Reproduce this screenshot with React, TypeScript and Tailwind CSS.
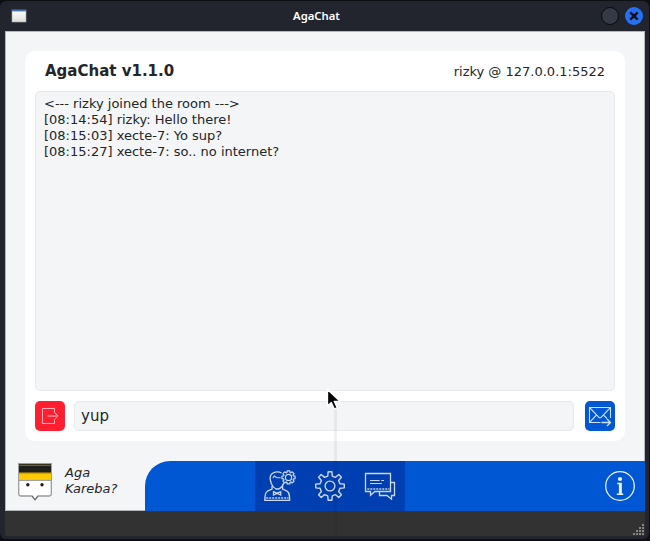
import React from "react";

const messages = [
  "<--- rizky joined the room --->",
  "[08:14:54] rizky: Hello there!",
  "[08:15:03] xecte-7: Yo sup?",
  "[08:15:27] xecte-7: so.. no internet?",
];

// Outline of a toothed wheel: eight teeth around (cx, cy).
function gearPath(cx: number, cy: number, outer: number, root: number, tip: number, base: number) {
  const points: string[] = [];
  for (let i = 0; i < 8; i++) {
    const mid = (i * Math.PI) / 4 - Math.PI / 2;
    const corners: [number, number][] = [
      [root, -base],
      [outer, -tip],
      [outer, tip],
      [root, base],
    ];
    for (const [r, a] of corners) {
      points.push(`${(cx + r * Math.cos(mid + a)).toFixed(2)} ${(cy + r * Math.sin(mid + a)).toFixed(2)}`);
    }
  }
  return `M${points.join("L")}Z`;
}

function WindowIcon() {
  return (
    <svg width="16" height="14" viewBox="0 0 16 14">
      <defs>
        <linearGradient id="pane" x1="0" y1="0" x2="0" y2="1">
          <stop offset="0" stopColor="#fff" />
          <stop offset="1" stopColor="#deded8" />
        </linearGradient>
      </defs>
      <rect x="1" y="1" width="14" height="12" fill="url(#pane)" stroke="#a9aaa8" strokeWidth="0.6" />
      <rect x="1" y="1" width="14" height="1.4" fill="#4773ad" />
      <rect x="1" y="2.2" width="14" height="0.8" fill="#a9c2e2" />
    </svg>
  );
}

function ProfileIcon() {
  return (
    <svg width="32" height="32" viewBox="0 0 32 32" fill="none" stroke="#ccd8ee">
      <path d="M17.5 3C15 1.4 10.5 1.6 8.6 3.4C6.3 4.4 6 7 6.2 9.5L7.2 13.5C8.2 15.8 10.2 18.2 12 19H14.8C16.8 18 19 15.8 19.9 12.8" strokeWidth="1.3" />
      <path d="M8.8 8L10.3 6L12.5 7.4C14 8 15 7.7 16.6 7.8" strokeWidth="1.1" />
      <path d="M8 16V19L3.4 21.2C1.1 22.5 .8 25 .8 30.4H25.6C25.6 25.5 25.6 22.5 23 21.2L18.6 19V16" strokeWidth="1.3" />
      <path d="M9.5 21.7V25L13 23.4L16.7 25V21.7L13 23.2Z" strokeWidth="1.3" />
      <path d="M2.2 28H24.5" strokeWidth="2" strokeDasharray="2 1" opacity="0.7" />
      <path d={gearPath(24.5, 7.4, 6.7, 5.1, 0.2, 0.3)} strokeWidth="1.2" strokeLinejoin="round" />
      <circle cx="24.5" cy="7.4" r="3.1" strokeWidth="1.2" />
    </svg>
  );
}

function SettingsIcon() {
  return (
    <svg width="32" height="32" viewBox="0 0 32 32" fill="none" stroke="#ccd8ee">
      <path d={gearPath(16, 16, 14.4, 10.2, 0.13, 0.22)} strokeWidth="1.4" strokeLinejoin="round" />
      <circle cx="16" cy="16" r="4.9" strokeWidth="1.4" />
    </svg>
  );
}

function ChatIcon() {
  return (
    <svg width="32" height="32" viewBox="0 0 32 32" fill="none" stroke="#ccd8ee">
      <path d="M1.5 3.5H26.5V21.5H10.8L6.5 25.3V21.5H1.5Z" strokeWidth="1.3" />
      <path d="M26.5 12.5H30.5V25.5H27.5V29.2L23 25.5H15.5V21.5" strokeWidth="1.3" />
      <path d="M6 10.5H15.6M17.2 10.5H20M6 13.5H17.8" strokeWidth="1.1" />
      <path d="M3.3 19H25.5" strokeWidth="2" strokeDasharray="2 1" opacity="0.7" />
    </svg>
  );
}

function InfoIcon() {
  return (
    <svg width="32" height="32" viewBox="0 0 32 32" fill="none" stroke="#edf3fc">
      <circle cx="16" cy="16" r="14.3" strokeWidth="1.25" />
      <circle cx="16" cy="9" r="2.1" fill="#edf3fc" stroke="none" />
      <path d="M13.2 13.5H17V24M12.8 24.2H19.2" strokeWidth="1.4" />
      <path d="M16.2 13V24" strokeWidth="2.6" />
    </svg>
  );
}

function LeaveIcon() {
  return (
    <svg width="30" height="30" viewBox="0 0 30 30" fill="none" stroke="#ffb3b8">
      <path d="M19.5 11.5V7.5H7.5V22.5H19.5V18.5" strokeWidth="1" />
      <path d="M12.5 15H21.5" strokeWidth="1.5" opacity="0.8" />
      <path d="M19.5 11.5L23 15L19.5 18.5" strokeWidth="1" />
    </svg>
  );
}

function SendIcon() {
  return (
    <svg width="30" height="30" viewBox="0 0 30 30" fill="none" stroke="#ccdff6">
      <path d="M15.5 21.5H4.5V6.5H25.5V17" strokeWidth="1.1" />
      <path d="M5 7L13.7 16.2Q15 17.2 16.3 16.2L25 7M5 21L11.4 14.2M18.6 14.2L22 17.5" strokeWidth="1.1" />
      <path d="M16.5 21.5H25M22 18L25.5 21.5L22 25" strokeWidth="1.3" />
    </svg>
  );
}

function Mascot() {
  return (
    <svg width="34" height="38" viewBox="0 0 34 38">
      <path d="M.7 .7H33.3V30.5Q33.3 33 31 33H19.8L17 36.8L14.2 33H3Q.7 33 .7 30.5Z" fill="#fff" stroke="#999b9e" strokeWidth="1.3" />
      <path d="M14 33.1L17 36.8L20 33.1" fill="none" stroke="#555" strokeWidth="1" />
      <rect x="1" y="1" width="32" height="9" fill="#1e1e1d" />
      <rect x="1" y="1.8" width="32" height="0.9" fill="#9b7c09" />
      <rect x="1" y="9" width="32" height="8" fill="#ffcb00" />
      <rect x="1" y="9" width="32" height="1" fill="#78620b" />
      <rect x="1" y="10.4" width="32" height="0.7" fill="#b79205" />
      <path d="M1 17.4H33" stroke="#898b8e" strokeWidth="0.9" />
      <circle cx="9.8" cy="21.7" r="1.7" fill="#1d1d1d" />
      <circle cx="24" cy="21.7" r="1.7" fill="#1d1d1d" />
    </svg>
  );
}

function ResizeGrip() {
  return (
    <svg width="12" height="12" viewBox="0 0 12 12" fill="#858585">
      {[0, 1, 2, 3].map((row) =>
        Array.from({ length: row + 1 }, (_, i) => (
          <rect key={`${row}-${i}`} x={10 - i * 3} y={row * 3 + 1} width="2" height="2" />
        )),
      )}
    </svg>
  );
}

export default function App() {
  return (
    <div className="relative h-[541px] w-[650px] overflow-hidden bg-[#0d0f14] pt-px pr-px pb-0.5 font-['DejaVu_Sans',sans-serif] text-[#232629]">
      <div className="flex h-[538px] w-[649px] flex-col rounded-md bg-[#22252e] pr-1 pl-[5px]">
        <header className="flex h-[30px] shrink-0 items-center">
          <div className="w-[82px] pl-1.5">
            <WindowIcon />
          </div>
          <h1 className="grow pr-0.5 pl-[42px] text-center font-['Noto_Sans',sans-serif] text-[11.3px] font-semibold text-white">AgaChat</h1>
          <div className="flex w-[139px] items-center justify-end gap-1.5 pr-0.5">
            <span className="size-[18px] rounded-full border border-[#08090c] bg-[#353945]" />
            <span className="flex size-[18px] items-center justify-center rounded-full bg-[#2472f2]">
              <svg width="10" height="10" viewBox="0 0 10 10" stroke="#0c111c" strokeWidth="2.5">
                <path d="M1.3 1.3L8.7 8.7M8.7 1.3L1.3 8.7" />
              </svg>
            </span>
          </div>
        </header>

        <main className="flex h-[480px] w-[640px] shrink-0 flex-col bg-[#f4f5f7] shadow-[inset_1px_1px_0_#b6b7ba,inset_-1px_-1px_0_#b6b7ba]">
          <section className="mx-5 mt-5 h-[390px] rounded-[10px] bg-white px-2.5">
            <div className="flex h-10 items-center justify-between px-2.5">
              <h2 className="text-[15px] font-bold">AgaChat v1.1.0</h2>
              <p className="pt-0.5 text-[13px]">rizky @ 127.0.0.1:5522</p>
            </div>
            <div className="h-[300px] rounded-[5px] border border-[#e8e9ec] bg-[#f4f5f7] px-2 pt-1 text-[13px] leading-4">
              {messages.map((message) => (
                <p key={message}>{message}</p>
              ))}
            </div>
            <div className="mt-2.5 flex h-[30px]">
              <button className="size-[30px] rounded-[5px] bg-[#ff1f30]">
                <LeaveIcon />
              </button>
              <input
                className="ml-[9px] h-[30px] w-[500px] rounded-[5px] border border-[#e8e9ec] bg-[#f4f5f7] px-1.5 text-[15px] outline-none"
                defaultValue="yup"
              />
              <button className="ml-[11px] size-[30px] rounded-[5px] bg-[#0057d3]">
                <SendIcon />
              </button>
            </div>
          </section>

          <footer className="mt-5 flex h-[50px]">
            <div className="flex w-[140px] pt-0.5 pl-[13px]">
              <Mascot />
              <p className="mt-0.5 ml-[13px] text-[13px] leading-4 italic">
                Aga
                <br />
                Kareba?
              </p>
            </div>
            <nav className="flex w-[500px] rounded-tl-[25px] bg-[#0057d3] pl-[110px]">
              <div className="flex w-[150px] bg-[#003fb1]">
                <button className="flex w-[50px] items-center justify-center">
                  <ProfileIcon />
                </button>
                <button className="flex w-[50px] items-center justify-center">
                  <SettingsIcon />
                </button>
                <button className="flex w-[50px] items-center justify-center">
                  <ChatIcon />
                </button>
              </div>
              <button className="ml-[190px] flex w-[50px] items-center justify-center">
                <InfoIcon />
              </button>
            </nav>
          </footer>
        </main>

        <div className="flex h-[25px] w-[640px] shrink-0 items-end justify-end bg-[#323232] pr-px pb-px">
          <ResizeGrip />
        </div>
      </div>

      <div className="absolute top-[409px] left-[334px] h-[127px] w-[3px] bg-black/5" />
      <svg className="absolute top-[388px] left-[326px]" width="16" height="24" viewBox="0 0 16 24">
        <path d="M1.5 1.5V18L5.3 14.4L8.3 21L11.2 19.7L8.2 13.3H14Z" fill="#050505" stroke="#fff" strokeWidth="1.3" strokeLinejoin="round" />
      </svg>
    </div>
  );
}
